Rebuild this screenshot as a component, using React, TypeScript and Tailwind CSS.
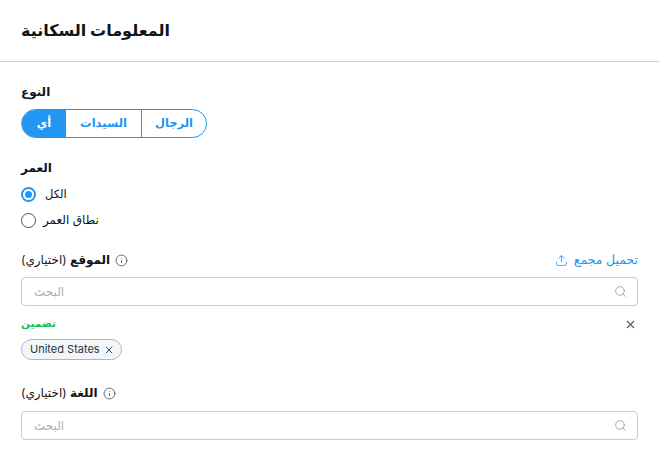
import { Info, Search, Upload, X } from 'lucide-react';

function SearchBox() {
  return (
    <div className="flex h-[29px] items-center justify-between rounded-[4px] border border-[#c2ccd6] bg-white pl-[12px] pr-[10px]">
      <span className="text-[12px] text-[#a3b0bd]">البحث</span>
      <Search className="h-[13px] w-[13px] text-[#8c9aa8]" strokeWidth={1.5} />
    </div>
  );
}

function FieldLabel({ name }: { name: string }) {
  return (
    <div className="flex items-center gap-[5px] text-[12px] text-[#0f1419]">
      <span>
        <b className="font-bold">{name}</b> (اختياري)
      </span>
      <Info className="h-[13px] w-[13px] text-[#3d4f60]" strokeWidth={1.5} />
    </div>
  );
}

export default function App() {
  return (
    <div className="h-[460px] w-[659px] overflow-hidden bg-white font-['Inter','DejaVu_Sans',sans-serif] text-[#0f1419]">
      <header className="flex h-[62px] items-center border-b border-[#c5d0dc] px-[21px] pb-[2px]">
        <h1 className="text-[16px] font-bold">المعلومات السكانية</h1>
      </header>

      <main className="px-[21px]">
        <section className="mt-[21px]">
          <div className="text-[12px] font-bold leading-[18px]">النوع</div>
          <div className="mt-[8px] flex h-[29px] w-[186px] overflow-hidden rounded-full border border-[#2196f3] text-[11.5px] font-bold text-[#2196f3]">
            <div className="flex w-[44px] items-center justify-center bg-[#2196f3] pt-px text-white">أي</div>
            <div className="flex w-[76px] items-center justify-center border-r border-[#2196f3] pt-px">السيدات</div>
            <div className="flex flex-1 items-center justify-center pt-px">الرجال</div>
          </div>
        </section>

        <section className="mt-[21px]">
          <div className="text-[12px] font-bold leading-[18px]">العمر</div>
          <div className="mt-[8px] flex h-[18px] items-center gap-[9px] text-[11.5px]">
            <span className="flex h-[15px] w-[15px] items-center justify-center rounded-full border-[2px] border-[#2196f3]">
              <span className="h-[7px] w-[7px] rounded-full bg-[#2196f3]" />
            </span>
            <span className="pt-px">الكل</span>
          </div>
          <div className="mt-[8px] flex h-[18px] items-center gap-[7px] text-[12px]">
            <span className="h-[15px] w-[15px] rounded-full border border-[#3d4f60]" />
            نطاق العمر
          </div>
        </section>

        <section className="mt-[22px]">
          <div className="flex h-[18px] items-center justify-between">
            <FieldLabel name="الموقع" />
            <div className="flex items-center gap-[6px] text-[12.5px] text-[#2196f3]">
              <Upload className="h-[13px] w-[13px]" strokeWidth={1.5} />
              تحميل مجمع
            </div>
          </div>
          <div className="mt-[8px]">
            <SearchBox />
          </div>
          <div className="mt-[9px] flex h-[18px] items-center justify-between pr-[1px]">
            <span className="text-[10.5px] font-bold text-[#17bf63]">تضمين</span>
            <X className="h-[13px] w-[13px] text-[#4a5c6e]" strokeWidth={2} />
          </div>
          <div className="mt-[6px] flex h-[21px] w-[101px] items-center gap-[3px] rounded-full border border-[#aab8c2] bg-[#f2f6f9] pl-[8px] font-['Inter',sans-serif] text-[11px] text-[#26333f]">
            United States
            <X className="h-[12px] w-[12px]" strokeWidth={1.75} />
          </div>
        </section>

        <section className="mt-[24px]">
          <FieldLabel name="اللغة" />
          <div className="mt-[9px]">
            <SearchBox />
          </div>
        </section>
      </main>
    </div>
  );
}
